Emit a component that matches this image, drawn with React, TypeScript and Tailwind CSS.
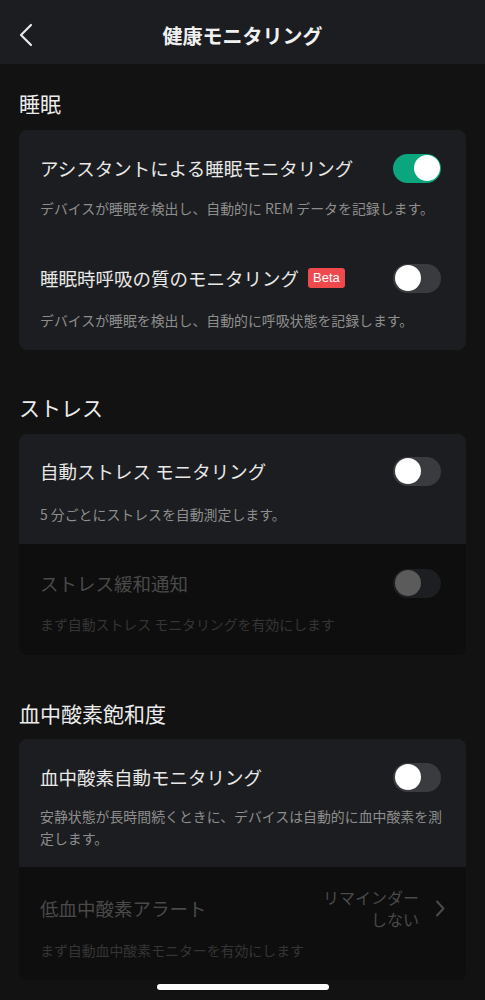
import React from 'react'
import clsx from 'clsx'

const font = {
  fontFamily: '"Noto Sans CJK JP", "Noto Sans", sans-serif',
}

type ToggleState = 'on' | 'off' | 'disabled'

const Toggle = ({ state }: { state: ToggleState }) => (
  <div
    className={clsx(
      'relative mr-[4px] h-[29px] w-[48px] shrink-0 rounded-full',
      state === 'on' && 'bg-[#0ba57e]',
      state === 'off' && 'bg-[#3a3b3f]',
      state === 'disabled' && 'bg-[#1d1e21]',
    )}
  >
    <div
      className={clsx(
        'absolute top-[1.5px] h-[26px] w-[26px] rounded-full',
        state === 'on' ? 'right-[1.5px] bg-white' : 'left-[1.5px]',
        state === 'off' && 'bg-white',
        state === 'disabled' && 'bg-[#5b5b5b]',
      )}
    />
  </div>
)

const SectionLabel = ({ children, className }: { children: React.ReactNode; className?: string }) => (
  <div className={clsx('px-[19px] text-[21px] leading-[28px] text-[#ececec]', className)}>
    {children}
  </div>
)

const ChevronLeft = () => (
  <svg width="16" height="24" viewBox="0 0 16 24" fill="none">
    <path d="M13 2 L3 12 L13 22" stroke="#e8e8e8" strokeWidth="2.2" strokeLinecap="round" strokeLinejoin="round" />
  </svg>
)

const ChevronRight = () => (
  <svg width="10" height="17" viewBox="0 0 10 17" fill="none">
    <path d="M2 1.5 L8.5 8.5 L2 15.5" stroke="#4b4b4b" strokeWidth="2" strokeLinecap="round" strokeLinejoin="round" />
  </svg>
)

const App = () => {
  return (
    <div className="relative h-[1000px] w-full overflow-hidden bg-[#121212]" style={font}>
      {/* header */}
      <div className="relative flex h-[64px] items-center justify-center bg-[#1c1d20] pt-[7px]">
        <div className="absolute left-[18px] top-[23px]">
          <ChevronLeft />
        </div>
        <div className="text-[20px] font-bold text-[#f0f0f0]">健康モニタリング</div>
      </div>

      {/* sleep */}
      <SectionLabel className="mt-[25px]">睡眠</SectionLabel>
      <div className="mx-[19px] mt-[13px] rounded-[8px] bg-[#1c1d20] px-[21px] pt-[23.5px] pb-[20px]">
        <div className="flex items-center justify-between">
          <div className="text-[18.5px] leading-[26px] text-[#e8e8e8]">アシスタントによる睡眠モニタリング</div>
          <Toggle state="on" />
        </div>
        <div className="mt-[15.5px] text-[13.9px] leading-[20px] text-[#8e8e8e]">
          デバイスが睡眠を検出し、自動的に REM データを記録します。
        </div>
        <div className="mt-[45.5px] flex items-center justify-between">
          <div className="flex items-center">
            <span className="text-[18.5px] leading-[26px] text-[#e8e8e8]">睡眠時呼吸の質のモニタリング</span>
            <span
              className="ml-[9px] flex h-[20px] items-center rounded-[3px] bg-[#ee4a4e] px-[5px] text-[13px] text-white"
              style={{ fontFamily: '"Liberation Sans", sans-serif' }}
            >
              Beta
            </span>
          </div>
          <Toggle state="off" />
        </div>
        <div className="mt-[17.5px] text-[13.9px] leading-[20px] text-[#8e8e8e]">
          デバイスが睡眠を検出し、自動的に呼吸状態を記録します。
        </div>
      </div>

      {/* stress */}
      <SectionLabel className="mt-[43px]">ストレス</SectionLabel>
      <div className="mx-[19px] mt-[13px] overflow-hidden rounded-[8px]">
        <div className="bg-[#1c1d20] px-[21px] pt-[22.5px] pb-[20px]">
          <div className="flex items-center justify-between">
            <div className="text-[18.5px] leading-[26px] text-[#e8e8e8]">自動ストレス モニタリング</div>
            <Toggle state="off" />
          </div>
          <div className="mt-[18.5px] text-[13.9px] leading-[20px] text-[#8e8e8e]">5 分ごとにストレスを自動測定します。</div>
        </div>
        <div className="bg-[#0e0e0e] px-[21px] pt-[24.5px] pb-[21px]">
          <div className="flex items-center justify-between">
            <div className="text-[18.5px] leading-[26px] text-[#4a4a4a]">ストレス緩和通知</div>
            <Toggle state="disabled" />
          </div>
          <div className="mt-[16.5px] text-[13.9px] leading-[20px] text-[#353535]">まず自動ストレス モニタリングを有効にします</div>
        </div>
      </div>

      {/* blood oxygen */}
      <SectionLabel className="mt-[44px]">血中酸素飽和度</SectionLabel>
      <div className="mx-[19px] mt-[12px] overflow-hidden rounded-[8px]">
        <div className="bg-[#1c1d20] px-[21px] pt-[23.5px] pb-[18px]">
          <div className="flex items-center justify-between">
            <div className="text-[18.5px] leading-[26px] text-[#e8e8e8]">血中酸素自動モニタリング</div>
            <Toggle state="off" />
          </div>
          <div className="mt-[13.5px] text-[13.9px] leading-[22px] text-[#8e8e8e]">
            安静状態が長時間続くときに、デバイスは自動的に血中酸素を測定します。
          </div>
        </div>
        <div className="bg-[#0e0e0e] px-[21px] pt-[19px] pb-[20px]">
          <div className="flex items-center justify-between">
            <div className="text-[18.5px] leading-[26px] text-[#4a4a4a]">低血中酸素アラート</div>
            <div className="flex items-center gap-[16px]">
              <div className="text-right text-[16px] leading-[22px] text-[#4a4a4a]">
                <div>リマインダー</div>
                <div>しない</div>
              </div>
              <ChevronRight />
            </div>
          </div>
          <div className="mt-[10px] text-[13.9px] leading-[20px] text-[#353535]">まず自動血中酸素モニターを有効にします</div>
        </div>
      </div>

      {/* home indicator */}
      <div className="absolute bottom-[10px] left-1/2 h-[6px] w-[172px] -translate-x-1/2 rounded-full bg-white" />
    </div>
  )
}

export default App
